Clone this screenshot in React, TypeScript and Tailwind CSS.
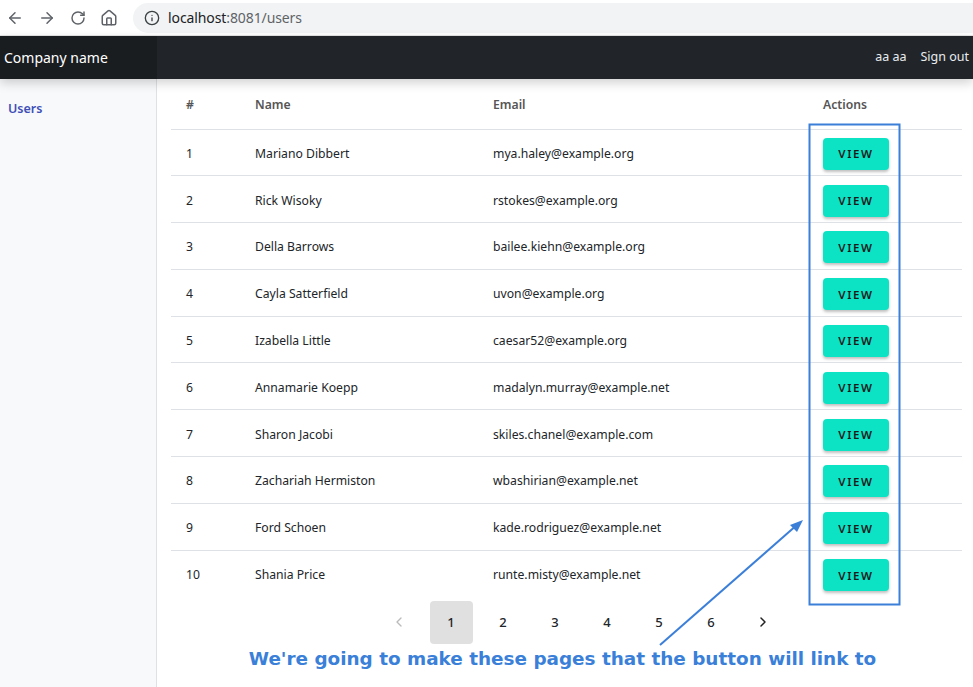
import { ArrowLeft, ArrowRight, RotateCw, Home, Info, ChevronLeft, ChevronRight } from 'lucide-react';

const users = [
  { id: 1, name: 'Mariano Dibbert', email: 'mya.haley@example.org' },
  { id: 2, name: 'Rick Wisoky', email: 'rstokes@example.org' },
  { id: 3, name: 'Della Barrows', email: 'bailee.kiehn@example.org' },
  { id: 4, name: 'Cayla Satterfield', email: 'uvon@example.org' },
  { id: 5, name: 'Izabella Little', email: 'caesar52@example.org' },
  { id: 6, name: 'Annamarie Koepp', email: 'madalyn.murray@example.net' },
  { id: 7, name: 'Sharon Jacobi', email: 'skiles.chanel@example.com' },
  { id: 8, name: 'Zachariah Hermiston', email: 'wbashirian@example.net' },
  { id: 9, name: 'Ford Schoen', email: 'kade.rodriguez@example.net' },
  { id: 10, name: 'Shania Price', email: 'runte.misty@example.net' },
];

const pages = [1, 2, 3, 4, 5, 6];

const BrowserBar = () => (
  <div className="h-[36px] flex items-center bg-white border-b border-[#e5e5e5] text-[#5f6368]">
    <div className="flex items-center gap-[14px] pl-[6px] pr-[12px]">
      <ArrowLeft size={18} strokeWidth={2} />
      <ArrowRight size={18} strokeWidth={2} />
      <RotateCw size={16} strokeWidth={2.2} />
      <Home size={18} strokeWidth={2} />
    </div>
    <div className="flex-1 h-[30px] ml-[3px] rounded-l-full bg-[#f1f3f4] flex items-center pl-[11px] gap-[8px]">
      <Info size={16} strokeWidth={2} className="text-[#3c4043]" />
      <span className="text-[14px] tracking-[-0.1px]">
        <span className="text-[#202124]">localhost</span>
        <span className="text-[#5f6368]">:8081/users</span>
      </span>
    </div>
  </div>
);

const Navbar = () => (
  <div className="relative z-10 h-[43px] flex bg-[#212529] shadow-[0_4px_10px_rgba(0,0,0,0.18)]">
    <div className="w-[157px] bg-[#1a1d20] flex items-center pl-[4px] text-white text-[14px]">
      Company name
    </div>
    <div className="flex-1 flex items-center justify-end gap-[14px] pr-[4px] text-[12.5px] text-[#e9ecef]">
      <span>aa aa</span>
      <span>Sign out</span>
    </div>
  </div>
);

const UsersTable = () => (
  <table className="w-full border-collapse text-[12.2px] text-[#212529]">
    <colgroup>
      <col className="w-[69px]" />
      <col className="w-[238px]" />
      <col className="w-[330px]" />
      <col />
    </colgroup>
    <thead>
      <tr className="h-[50px] border-b border-[#dee2e6] text-left text-[#555]">
        <th className="pl-[15px] pt-[2px] font-semibold">#</th>
        <th className="pl-[15px] pt-[2px] font-semibold">Name</th>
        <th className="pl-[15px] pt-[2px] font-semibold">Email</th>
        <th className="pl-[15px] pt-[2px] font-semibold">Actions</th>
      </tr>
    </thead>
    <tbody>
      {users.map((u, i) => (
        <tr
          key={u.id}
          className={`h-[46.8px] ${i < users.length - 1 ? 'border-b border-[#dee2e6]' : ''}`}
        >
          <td className="pl-[15px] pt-[3px]">{u.id}</td>
          <td className="pl-[15px] pt-[3px]">{u.name}</td>
          <td className="pl-[15px] pt-[3px]">{u.email}</td>
          <td className="pl-[15px] pt-[3px]">
            <button className="w-[66px] h-[32px] rounded-[4px] bg-[#0ce3c5] text-[#1a1a1a] text-[11.5px] font-semibold tracking-[1.6px] shadow-[0_2px_3px_rgba(0,0,0,0.25)]">
              VIEW
            </button>
          </td>
        </tr>
      ))}
    </tbody>
  </table>
);

const Pagination = () => (
  <div className="flex justify-center gap-[9px] pl-[29px] mt-[4px] text-[13px] text-[#212529]">
    <div className="w-[43px] h-[43px] flex items-center justify-center text-[#bbb]">
      <ChevronLeft size={16} strokeWidth={2} />
    </div>
    {pages.map((p) => (
      <div
        key={p}
        className={`w-[43px] h-[43px] flex items-center justify-center rounded-[4px] font-medium ${
          p === 1 ? 'bg-[#e0e0e0]' : ''
        }`}
      >
        {p}
      </div>
    ))}
    <div className="w-[43px] h-[43px] flex items-center justify-center text-[#222]">
      <ChevronRight size={16} strokeWidth={2.2} />
    </div>
  </div>
);

const Annotation = () => (
  <svg
    className="absolute inset-0 pointer-events-none"
    width="973"
    height="687"
    viewBox="0 0 973 687"
  >
    <rect x="809.5" y="124.5" width="90" height="480" fill="none" stroke="#3b7fd8" strokeWidth="2" />
    <line x1="660" y1="645" x2="798" y2="524" stroke="#3b7fd8" strokeWidth="2" />
    <polygon points="803,520 790,525 797,532" fill="#3b7fd8" />
  </svg>
);

export default function App() {
  return (
    <div className="relative w-[973px] h-[687px] overflow-hidden bg-white font-['Noto_Sans',sans-serif]">
      <BrowserBar />
      <Navbar />
      <div className="flex h-[608px]">
        <aside className="w-[157px] shrink-0 bg-[#f8f9fa] border-r border-[#dee2e6] pt-[16px] pl-[8px]">
          <span className="text-[12.5px] font-semibold text-[#3f4fb8]">Users</span>
        </aside>
        <main className="flex-1 pl-[14px] pr-[11px]">
          <UsersTable />
          <Pagination />
          <p className="text-center mt-[1px] pr-[8px] font-['DejaVu_Sans',sans-serif] font-bold text-[18.4px] text-[#3a80d9]">
            We're going to make these pages that the button will link to
          </p>
        </main>
      </div>
      <Annotation />
    </div>
  );
}
